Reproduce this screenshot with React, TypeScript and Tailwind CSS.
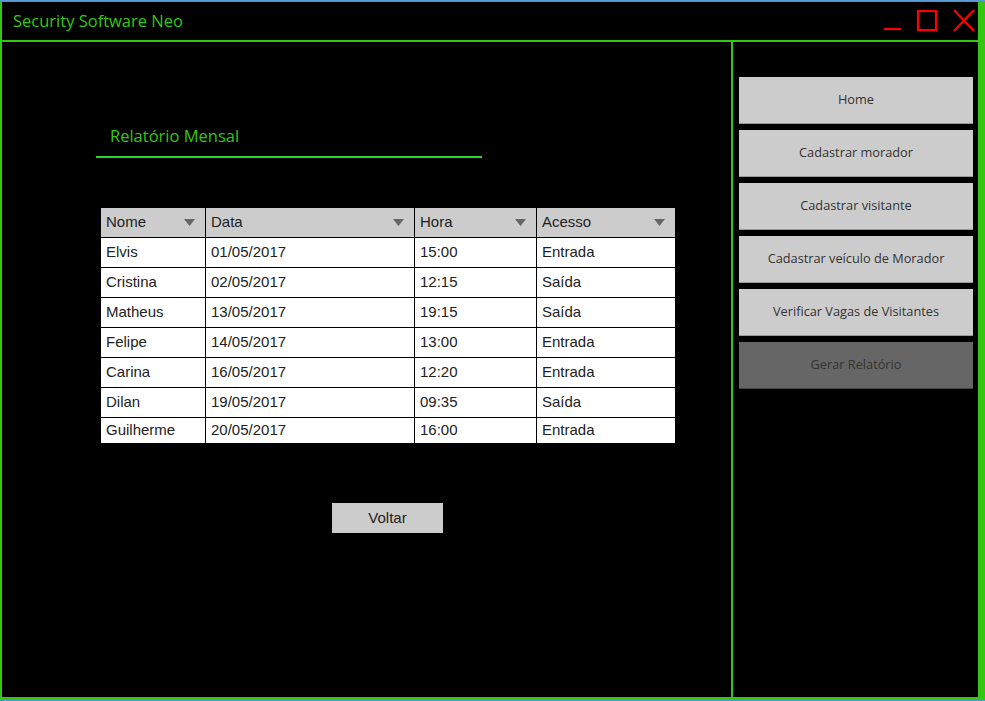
import React from "react";

const rows = [
  ["Elvis", "01/05/2017", "15:00", "Entrada"],
  ["Cristina", "02/05/2017", "12:15", "Saída"],
  ["Matheus", "13/05/2017", "19:15", "Saída"],
  ["Felipe", "14/05/2017", "13:00", "Entrada"],
  ["Carina", "16/05/2017", "12:20", "Entrada"],
  ["Dilan", "19/05/2017", "09:35", "Saída"],
  ["Guilherme", "20/05/2017", "16:00", "Entrada"],
];

const cols = [
  { label: "Nome", w: "w-[104px]" },
  { label: "Data", w: "w-[209px]" },
  { label: "Hora", w: "w-[122px]" },
  { label: "Acesso", w: "w-[139px]" },
];

const menu = [
  "Home",
  "Cadastrar morador",
  "Cadastrar visitante",
  "Cadastrar veículo de Morador",
  "Verificar Vagas de Visitantes",
];

function Caret() {
  return (
    <svg width="11" height="7" viewBox="0 0 11 7" className="shrink-0">
      <path d="M0 0 L11 0 L5.5 7 Z" fill="#666" />
    </svg>
  );
}

function WindowControls() {
  return (
    <div className="flex items-center gap-[14px] pr-[2px]">
      <svg width="20" height="22" viewBox="0 0 20 22">
        <line x1="2" y1="19" x2="19" y2="19" stroke="#ff0000" strokeWidth="2.2" />
      </svg>
      <svg width="22" height="22" viewBox="0 0 22 22">
        <rect x="2" y="1" width="18" height="19" fill="none" stroke="#ff0000" strokeWidth="2.2" />
      </svg>
      <svg width="24" height="24" viewBox="0 0 24 24">
        <path d="M2 1 L22 22 M22 1 L2 22" stroke="#ff0000" strokeWidth="2.2" />
      </svg>
    </div>
  );
}

export default function App() {
  return (
    <div className="h-[701px] w-[985px] overflow-hidden border-t border-b border-[#5b9bd5] bg-black">
      <div
        className="flex h-full flex-col border-t border-l-2 border-b-[3px] border-r-[7px] border-[#33c711]"
        style={{ fontFamily: '"Open Sans", "Noto Sans", sans-serif' }}
      >
        {/* title bar */}
        <div className="flex h-[40px] shrink-0 items-center justify-between border-b-2 border-[#33c711] pl-[11px]">
          <span className="text-[16.5px] text-[#33c711]">Security Software Neo</span>
          <WindowControls />
        </div>

        <div className="flex flex-1">
          {/* main panel */}
          <div className="flex w-[731px] shrink-0 flex-col border-r-2 border-[#33c711]">
            <div className="ml-[94px] mt-[82px] w-[386px] border-b-2 border-[#2ed32e] pb-[7px] pl-[14px]">
              <span className="text-[16.5px] text-[#33c711]">Relatório Mensal</span>
            </div>

            <div
              className="ml-[99px] mt-[50px] w-[574px] text-[15px] text-[#222]"
              style={{ fontFamily: '"Liberation Sans", Arial, sans-serif' }}
            >
              <div className="flex h-[29px] bg-[#cccccc]">
                {cols.map((c, i) => (
                  <div
                    key={c.label}
                    className={`${c.w} flex items-center justify-between pl-[5px] pr-[10px] ${
                      i > 0 ? "border-l border-black" : ""
                    }`}
                  >
                    <span>{c.label}</span>
                    <Caret />
                  </div>
                ))}
              </div>
              {rows.map((r, ri) => (
                <div
                  key={ri}
                  className={`flex border-t border-black bg-white ${
                    ri === rows.length - 1 ? "h-[26px]" : "h-[30px]"
                  }`}
                >
                  {r.map((cell, ci) => (
                    <div
                      key={ci}
                      className={`${cols[ci].w} flex items-center pl-[5px] ${
                        ci > 0 ? "border-l border-black" : ""
                      }`}
                    >
                      {cell}
                    </div>
                  ))}
                </div>
              ))}
            </div>

            <button
              className="ml-[330px] mt-[60px] h-[30px] w-[111px] bg-[#cccccc] text-[15px] text-[#222]"
              style={{ fontFamily: '"Liberation Sans", Arial, sans-serif' }}
            >
              Voltar
            </button>
          </div>

          {/* sidebar */}
          <div className="flex flex-1 flex-col gap-[6px] pl-[6px] pr-[5px] pt-[35px]">
            {menu.map((m) => (
              <button
                key={m}
                className="h-[47px] w-full border-b border-[#999] bg-[#cccccc] text-[12.75px] text-[#333]"
              >
                {m}
              </button>
            ))}
            <button className="h-[47px] w-full border-b border-[#444] bg-[#666666] text-[12.75px] text-[#333]">
              Gerar Relatório
            </button>
          </div>
        </div>
      </div>
    </div>
  );
}
